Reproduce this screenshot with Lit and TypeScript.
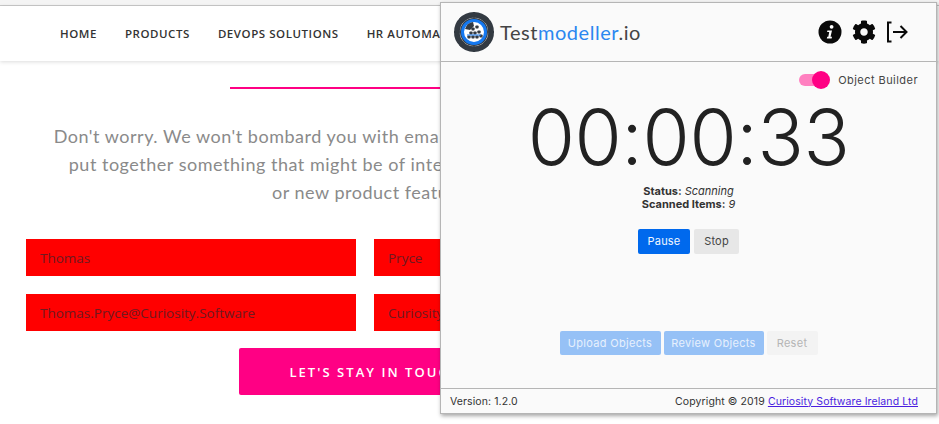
import { LitElement, html, css, svg } from "lit";
import { customElement } from "lit/decorators.js";

const segments = [0, 45, 90, 135, 180, 225, 270, 315];

@customElement("app-root")
export class AppRoot extends LitElement {
  static styles = css`
    :host { display: block; position: relative; width: 939px; height: 424px; overflow: hidden; background: #fff; font-family: "Lato", sans-serif; }
    .topstrip { height: 5px; background: #f4f4f4; border-bottom: 1px solid #c9c9c9; }
    .nav { height: 55px; background: #fff; box-shadow: 0 1px 4px rgba(0,0,0,.14); display: flex; align-items: center; gap: 28px; padding-left: 60px; font: 600 11.5px "Open Sans", sans-serif; letter-spacing: .55px; color: #333; white-space: nowrap; }
    .page { width: 750px; }
    .rule { height: 2px; background: #ff0084; margin: 26px 0 0 230px; width: 290px; }
    .intro { margin: 33px 0 0; text-align: center; white-space: nowrap; font: 400 18px/28px "Lato", sans-serif; letter-spacing: .52px; color: #8a8a8a; }
    .form { display: grid; grid-template-columns: 330px 350px; column-gap: 18px; row-gap: 18px; margin: 33px 0 0 26px; }
    .field { height: 37px; background: #ff0000; color: #6e1a20; display: flex; align-items: center; padding-left: 14px; font: 400 13.5px "Open Sans", sans-serif; overflow: hidden; white-space: nowrap; }
    .cta { display: flex; justify-content: center; margin-top: 17px; }
    .cta span { width: 272px; height: 47px; border-radius: 2px; background: #ff0084; color: #fff; display: flex; align-items: center; justify-content: center; font: 600 13px "Open Sans", sans-serif; letter-spacing: 2.05px; white-space: nowrap; }

    .panel { position: absolute; left: 440px; top: 2px; width: 495px; height: 410px; background: #fafafa; border: 1px solid #b5b5b5; box-shadow: 1px 2px 4px rgba(0,0,0,.35); display: flex; flex-direction: column; font-family: "Inter", sans-serif; color: #333; }
    .head { height: 58px; border-bottom: 1px solid #b5b5b5; display: flex; align-items: center; padding-left: 12px; flex: none; }
    .brand { font: 400 20px "Lato", sans-serif; letter-spacing: .55px; color: #444; margin-left: 5px; }
    .brand b { font-weight: 400; color: #2b87f0; }
    .icons { margin-left: auto; margin-right: 28px; display: flex; align-items: center; gap: 10px; }
    .body { flex: 1; display: flex; flex-direction: column; align-items: center; position: relative; }
    .toggle { align-self: flex-end; display: flex; align-items: center; margin: 11px 18px 0 0; font-size: 11px; letter-spacing: .45px; color: #444; }
    .track { width: 24px; height: 12px; border-radius: 6px 0 0 6px; background: #ff80c0; position: relative; margin-right: 15px; }
    .knob { position: absolute; left: 13px; top: -3px; width: 18px; height: 18px; border-radius: 50%; background: #ff0084; }
    .timer { font: 300 76.5px/1 "Inter", sans-serif; color: #222; margin-top: 12px; letter-spacing: -.4px; }
    .status { margin-top: 9px; font-size: 11px; line-height: 13px; text-align: center; color: #333; }
    .status b { font-weight: 700; }
    .row { display: flex; gap: 4px; margin-top: 18px; }
    .btn { height: 25px; display: flex; align-items: center; justify-content: center; border-radius: 2px; font-size: 11px; letter-spacing: .2px; }
    .pause { width: 52px; background: #0069ed; color: #f2f7ff; }
    .stop { width: 45px; background: #e7e7e7; color: #444; }
    .lower { margin-top: auto; margin-bottom: 33px; gap: 3px; }
    .soft { background: #96c1f6; color: #e6f0fd; letter-spacing: .3px; height: 24px; }
    .upload { width: 101px; }
    .review { width: 100px; }
    .reset { width: 51px; height: 24px; background: #f3f3f3; color: #b5b5b5; letter-spacing: .3px; }
    .foot { height: 24px; flex: none; border-top: 1px solid #b5b5b5; display: flex; align-items: center; justify-content: space-between; padding: 0 18px 0 9px; font-size: 10.5px; color: #333; letter-spacing: .1px; }
    .foot a { color: #4a1ee0; text-decoration: underline; }
    svg { display: block; }
  `;

  private logo() {
    return html`<svg width="42" height="42" viewBox="0 0 42 42">
      ${segments.map((a) => svg`<path transform="rotate(${a + 22.5} 21 21)" d="M12.5 2.9 A20 20 0 0 1 29.5 2.9 L27.2 8.2 A14 14 0 0 0 14.8 8.2 Z" fill="#333a42"/>`)}
      <circle cx="21" cy="21" r="14" fill="#333a42"/>
      <circle cx="21" cy="21" r="11.5" fill="#fff" stroke="#1478f0" stroke-width="3"/>
      <path d="M12 18 A10 10 0 0 1 20 11 L21 15 L17 19 Z" fill="#333a42"/>
      ${[[20,18],[24,16],[18,22],[22,22],[26,21],[16,26],[20,26],[24,26],[28,25]].map(([x,y]) => svg`<rect x="${x-1.6}" y="${y-1.6}" width="3.2" height="3.2" rx=".8" fill="#333a42"/>`)}
      <path d="M14 24 H28" stroke="#1478f0" stroke-width="1"/>
    </svg>`;
  }

  render() {
    return html`
      <div class="topstrip"></div>
      <nav class="nav"><span>HOME</span><span>PRODUCTS</span><span>DEVOPS SOLUTIONS</span><span>HR AUTOMATION</span></nav>
      <main class="page">
        <div class="rule"></div>
        <p class="intro">Don't worry. We won't bombard you with emails. But every now and then we<br>put together something that might be of interest to you, such as an event<br>or new product features.</p>
        <div class="form">
          <div class="field">Thomas</div><div class="field">Pryce</div>
          <div class="field">Thomas.Pryce@Curiosity.Software</div><div class="field">Curiosity Software</div>
        </div>
        <div class="cta"><span>LET'S STAY IN TOUCH</span></div>
      </main>

      <section class="panel">
        <header class="head">
          ${this.logo()}
          <div class="brand">Test<b>modeller</b>.io</div>
          <div class="icons">
            <svg width="24" height="24" viewBox="0 0 24 24">
              <circle cx="12" cy="12" r="11.5" fill="#0a0a0a"/>
              <circle cx="13.6" cy="6.8" r="1.9" fill="#fff"/>
              <path d="M9.4 10.4 H14 L12.5 16.8 H14 L13.6 18.4 H8.8 L9.2 16.8 H10.3 L11.2 12 H9.1 Z" fill="#fff"/>
            </svg>
            <svg width="24" height="24" viewBox="0 0 512 512"><path fill="#0a0a0a" d="M487.4 315.7l-42.6-24.6c4.3-23.2 4.3-47 0-70.2l42.6-24.6c4.9-2.8 7.1-8.6 5.5-14-11.1-35.6-30-67.8-54.7-94.6-3.8-4.1-10-5.1-14.8-2.3L380.8 110c-17.9-15.4-38.5-27.3-60.8-35.1V25.8c0-5.6-3.9-10.5-9.4-11.7-36.7-8.2-74.3-7.8-109.2 0-5.5 1.2-9.4 6.1-9.4 11.7V75c-22.2 7.9-42.8 19.8-60.8 35.1L88.7 85.5c-4.9-2.8-11-1.9-14.8 2.3-24.7 26.7-43.6 58.9-54.7 94.6-1.7 5.4.6 11.2 5.5 14L67.3 221c-4.3 23.2-4.3 47 0 70.2l-42.6 24.6c-4.9 2.8-7.1 8.6-5.5 14 11.1 35.6 30 67.8 54.7 94.6 3.8 4.1 10 5.1 14.8 2.3l42.6-24.6c17.9 15.4 38.5 27.3 60.8 35.1v49.2c0 5.6 3.9 10.5 9.4 11.7 36.7 8.2 74.3 7.8 109.2 0 5.5-1.2 9.4-6.1 9.4-11.7v-49.2c22.2-7.9 42.8-19.8 60.8-35.1l42.6 24.6c4.9 2.8 11 1.9 14.8-2.3 24.7-26.7 43.6-58.9 54.7-94.6 1.5-5.5-.7-11.3-5.6-14.1zM256 336c-44.1 0-80-35.9-80-80s35.9-80 80-80 80 35.9 80 80-35.9 80-80 80z"/></svg>
            <svg width="22" height="22" viewBox="0 0 22 22" fill="none" stroke="#0a0a0a" stroke-width="2">
              <path d="M5.5 1.5 H2 V20.5 H5.5"/>
              <path d="M7 11 H20.5 M14.5 5 L20.5 11 L14.5 17"/>
            </svg>
          </div>
        </header>
        <div class="body">
          <div class="toggle"><span class="track"><span class="knob"></span></span><span>Object Builder</span></div>
          <div class="timer">00:00:33</div>
          <div class="status"><b>Status:</b> <i>Scanning</i><br><b>Scanned Items:</b> <i>9</i></div>
          <div class="row"><span class="btn pause">Pause</span><span class="btn stop">Stop</span></div>
          <div class="row lower"><span class="btn soft upload">Upload Objects</span><span class="btn soft review">Review Objects</span><span class="btn reset">Reset</span></div>
        </div>
        <footer class="foot"><span>Version: 1.2.0</span><span>Copyright © 2019 <a href="#">Curiosity Software Ireland Ltd</a></span></footer>
      </section>
    `;
  }
}
